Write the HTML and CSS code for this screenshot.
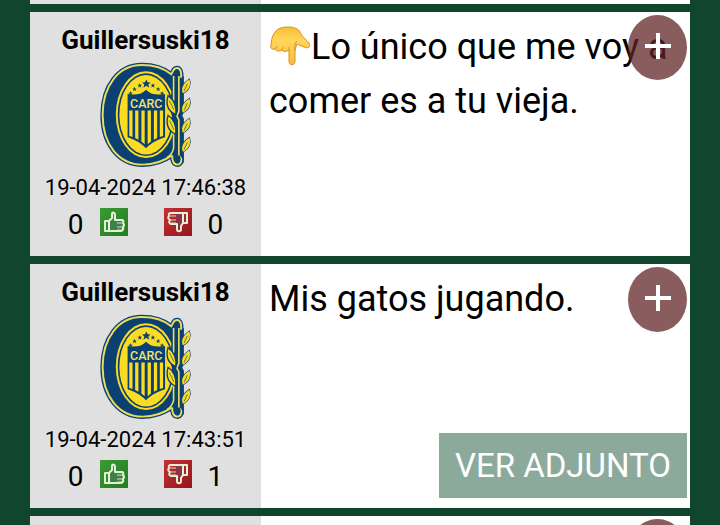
FILE: index.html
```html
<!DOCTYPE html>
<html lang="es">
<head>
<meta charset="utf-8">
<meta name="viewport" content="width=device-width, initial-scale=1">
<title>Foro</title>
<link rel="stylesheet" href="styles.css">
</head>
<body>
<svg class="defs" aria-hidden="true">
  <defs>
    <path id="leaf" d="M0 0C-7-17 4-33 20-43C26-27 19-9 0 0Z"/>
    <path id="star" d="M0-7L2-2L7-2L3 1L5 7L0 3L-5 7L-3 1L-7-2L-2-2Z"/>
    <path id="letter-c" d="M245 55C222 36 188 27 155 27C85 27 36 90 36 179C36 268 85 330 158 330C194 330 224 318 248 301C246 318 253 330 264 330C275 329 279 315 274 302C269 287 270 278 270 260L270 100C270 78 277 68 275 52C273 38 266 33 256 38C250 42 250 48 245 55Z"/>
    <symbol id="crest" viewBox="28 20 280 318">
      <g class="blue blue-line">
        <use href="#letter-c" stroke-width="14"/>
        <path stroke-width="4" d="M270 62H281V172L276 181L281 190V322H262Z"/>
        <use href="#leaf" x="280" y="113" stroke-width="4"/>
        <use href="#leaf" x="280" y="172" stroke-width="4"/>
        <use href="#leaf" x="280" y="233" stroke-width="4"/>
        <use href="#leaf" x="280" y="291" stroke-width="4"/>
      </g>
      <use href="#letter-c" class="blue yellow-line" stroke-width="6"/>
      <ellipse class="yellow" cx="168" cy="178" rx="92" ry="132"/>
      <ellipse class="blue" cx="168" cy="178" rx="86" ry="126"/>
      <ellipse class="yellow" cx="168" cy="178" rx="81" ry="121"/>
      <path class="blue" d="M250 66L282 66V170L277 181L282 192V316L270 300L246 302C250 270 251 250 251 236L240 210L247 182L240 160Z"/>
      <path class="thin yellow-line" d="M252 60V136M252 224V280Q248 300 232 308M268 60V168L262 182L268 194V302"/>
      <g class="yellow">
        <use href="#leaf" x="280" y="113"/>
        <use href="#leaf" x="280" y="172"/>
        <use href="#leaf" x="280" y="233"/>
        <use href="#leaf" x="280" y="291"/>
      </g>
      <path class="inner-leaf" d="M259 178C233 166 228 144 235 120C254 133 261 154 259 178ZM259 238C233 226 228 206 235 180C254 193 261 215 259 238Z"/>
      <path class="leaf-line" d="M239 135L253 163M239 196L253 224M284 106L294 84M284 165L294 143M284 226L294 204M284 284L294 262"/>
      <path class="blue" d="M168 102C157 115 138 120 112 115V247C130 253 150 262 168 280C187 262 207 253 226 247V115C199 120 180 115 168 102Z"/>
      <path class="yellow" d="M117 165H127V246L117 243ZM135 165H145V254L135 249ZM154 165H164V268L154 260ZM173 165H183V260L173 268ZM192 165H202V249L192 254ZM210 165H220V243L210 246Z"/>
      <text class="crest-text" x="169" y="159">CARC</text>
      <g class="blue">
        <use href="#star" x="121" y="113"/><use href="#star" x="133" y="100"/><use href="#star" x="149" y="89"/>
        <path d="M169 71L173 79L182 80L175 86L178 96L169 90L160 96L163 86L156 80L165 79Z"/>
        <use href="#star" x="189" y="89"/><use href="#star" x="205" y="100"/><use href="#star" x="217" y="113"/>
      </g>
    </symbol>
    <linearGradient id="green" x1="0" y1="0" x2="1" y2="1"><stop stop-color="#3a9b35"/><stop offset="1" stop-color="#237c22"/></linearGradient>
    <linearGradient id="red" x1="0" y1="0" x2="1" y2="1"><stop stop-color="#c13236"/><stop offset="1" stop-color="#96151c"/></linearGradient>
    <symbol id="up" viewBox="0 0 28 28">
      <path fill="url(#green)" d="M0 0H28V28H0Z"/>
      <path fill="#3f7f49" d="M10 13L15 12H23V23H10Z"/>
      <path class="hand" d="M5 13H9V23H5ZM9 13L12 10V6C12 4 15 4 15 7V12H22Q24 12 23 15Q25 17 23 19Q24 22 21 23H9"/>
      <path class="finger" d="M17 15H23M17 19H23M17 22H21"/>
    </symbol>
    <symbol id="down" viewBox="0 0 28 28">
      <path fill="url(#red)" d="M0 0H28V28H0Z"/>
      <path fill="#8c3549" d="M12 6H20V14L16 18H12Z"/>
      <path class="hand" d="M19 5H23V15H19ZM19 15L17 18V21C17 24 13 24 13 21V16H7Q4 15 6 12Q3 10 5 8Q4 5 7 5H19"/>
      <path class="finger" d="M6 8H12M6 12H12M7 15H12"/>
    </symbol>
    <linearGradient id="skin" x1="0" y1="0" x2="0" y2="1"><stop stop-color="#f9bd35"/><stop offset=".35" stop-color="#ffd75b"/><stop offset="1" stop-color="#fbb936"/></linearGradient>
  </defs>
</svg>
<main class="feed">
  <article class="post post-end"><div class="author"></div></article>

  <article class="post">
    <aside class="author">
      <h2 class="name">Guillersuski18</h2>
      <svg class="crest" role="img" aria-label="Escudo CARC"><use href="#crest"/></svg>
      <time class="date" datetime="2024-04-19T17:46:38">19-04-2024 17:46:38</time>
      <div class="votes">
        <span>0</span>
        <button class="vote" type="button" aria-label="Me gusta"><svg><use href="#up"/></svg></button>
        <button class="vote vote-down" type="button" aria-label="No me gusta"><svg><use href="#down"/></svg></button>
        <span>0</span>
      </div>
    </aside>
    <div class="content">
      <p class="message"><svg class="pointing" viewBox="0 0 42 42" role="img" aria-label="Mano señalando abajo"><path fill="url(#skin)" stroke="#d99021" d="M3 13C6 4 11 2 19 2C27 2 31 5 32 9C34 13 38 15 40 18C42 22 39 24 35 22L28 19C27 22 26 24 26 26V36C26 41 20 41 20 36V25C17 27 14 27 13 25C10 27 7 26 6 24C3 25 1 23 2 20Z"/><path fill="none" stroke="#dc962a" d="M8 21Q7 24 6 24M14 22Q14 25 12 25M20 22V26M26 26Q25 18 28 16"/></svg>Lo único que me voy a comer es a tu vieja.</p>
      <button class="more" type="button" aria-label="Más opciones"><svg viewBox="0 0 28 28"><path d="M14 1V27M1 14H27"/></svg></button>
    </div>
  </article>

  <article class="post">
    <aside class="author">
      <h2 class="name">Guillersuski18</h2>
      <svg class="crest" role="img" aria-label="Escudo CARC"><use href="#crest"/></svg>
      <time class="date" datetime="2024-04-19T17:43:51">19-04-2024 17:43:51</time>
      <div class="votes">
        <span>0</span>
        <button class="vote" type="button" aria-label="Me gusta"><svg><use href="#up"/></svg></button>
        <button class="vote vote-down" type="button" aria-label="No me gusta"><svg><use href="#down"/></svg></button>
        <span>1</span>
      </div>
    </aside>
    <div class="content">
      <p class="message">Mis gatos jugando.</p>
      <button class="more" type="button" aria-label="Más opciones"><svg viewBox="0 0 28 28"><path d="M14 1V27M1 14H27"/></svg></button>
      <button class="attachment" type="button">VER ADJUNTO</button>
    </div>
  </article>

  <article class="post">
    <aside class="author"></aside>
    <div class="content">
      <button class="more" type="button" aria-label="Más opciones"><svg viewBox="0 0 28 28"><path d="M14 1V27M1 14H27"/></svg></button>
    </div>
  </article>
</main>
</body>
</html>
```
FILE: styles.css
```css
* {
  box-sizing: border-box;
}

body {
  margin: 0;
  background: #10452e;
  color: #000;
  font-family: Roboto, "Liberation Sans", sans-serif;
}

button {
  border: 0;
  padding: 0;
  font: inherit;
  cursor: pointer;
}

.defs {
  position: absolute;
  width: 0;
  height: 0;
}

.feed {
  display: flex;
  flex-direction: column;
  gap: 8px;
  height: 100vh;
  padding: 0 30px;
  overflow: hidden;
}

.post {
  display: grid;
  flex: none;
  grid-template-columns: 35% 1fr;
  min-height: 244px;
  background: #fff;
}

.post-end {
  min-height: 4px;
}

.author {
  display: flex;
  flex-direction: column;
  align-items: center;
  background: #e0e0e0;
}

.name {
  margin: 12px 0 6px;
  font-size: 26px;
  font-weight: 700;
  line-height: 32px;
}

.crest {
  width: 92px;
  height: 106px;
}

.date {
  margin-top: 6px;
  font-size: 22px;
  line-height: 28px;
}

.votes {
  display: flex;
  align-items: flex-start;
  gap: 16px;
  margin-top: 6px;
  font-size: 28px;
  line-height: 34px;
}

.vote {
  display: flex;
  background: none;
}

.vote svg {
  width: 28px;
  height: 28px;
}

.vote-down {
  margin-left: 20px;
}

.content {
  position: relative;
  display: flex;
  flex-direction: column;
  align-items: flex-end;
  justify-content: space-between;
  padding: 8px 3px 10px 8px;
}

.message {
  align-self: stretch;
  margin: 0;
  font-size: 36px;
  line-height: 54px;
}

.pointing {
  width: 42px;
  height: 42px;
  vertical-align: -8px;
}

.more {
  position: absolute;
  top: 3px;
  right: 3px;
  display: grid;
  place-items: center;
  width: 59px;
  height: 65px;
  padding-bottom: 4px;
  border-radius: 50%;
  background: rgba(96, 36, 36, 0.74);
}

.more svg {
  width: 28px;
  height: 28px;
  fill: none;
  stroke: #fff;
  stroke-width: 4;
}

.attachment {
  padding: 0 16px;
  background: #8caa9c;
  color: #fff;
  font-size: 33px;
  line-height: 65px;
}

.blue {
  fill: #0b4072;
}

.yellow {
  fill: #fbdc22;
}

.blue-line {
  stroke: #0b4072;
}

.yellow-line {
  stroke: #e6dc62;
}

.thin {
  fill: none;
  stroke-width: 5;
}

.inner-leaf {
  fill: #fbdc22;
  stroke: #0b4072;
  stroke-width: 4;
}

.leaf-line {
  fill: none;
  stroke: #0b4072;
  stroke-width: 2;
}

.crest-text {
  fill: #f2e36b;
  font-family: Roboto, sans-serif;
  font-size: 38px;
  font-weight: 500;
  text-anchor: middle;
}

.hand {
  fill: none;
  stroke: #e3f3d5;
  stroke-width: 2;
  stroke-linejoin: round;
}

.finger {
  fill: none;
  stroke: #c9e4bd;
  stroke-width: 1;
}
```
